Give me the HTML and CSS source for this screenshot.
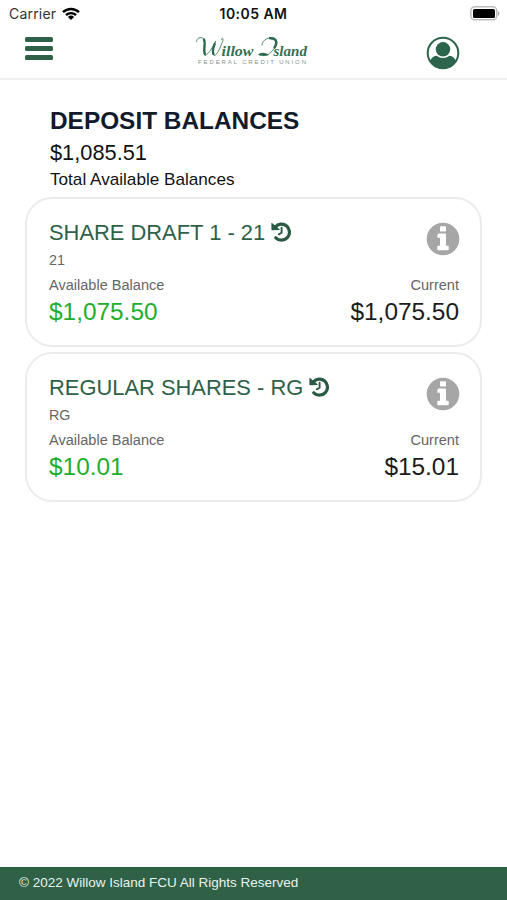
FILE: index.html
```html
<!DOCTYPE html>
<html lang="en">
<head>
<meta charset="utf-8">
<title>Deposit Balances</title>
<link rel="stylesheet" href="styles.css">
</head>
<body>
<svg class="defs" aria-hidden="true">
  <symbol id="history" viewBox="0 0 20 20"><path class="arc" d="M4.200 5.200A8 8 0 1 1 4.800 15.800"/><path d="M.4 1.200Q.4.600 1 1L8.600 7.300Q9 8 8.200 8L1.200 8.300Q.4 8.300.4 7.500z"/><path class="hand" d="M10.600 5.800V10.800L7.800 12.300"/></symbol>
  <symbol id="info" viewBox="0 0 34 34"><path fill-rule="evenodd" d="M17 .7a16.300 16.300 0 1 0 0 32.600A16.300 16.300 0 0 0 17 .7zM14.700 4.200h4.600q.7 0 .7.700v3.800q0 .7-.7.700h-4.600q-.7 0-.7-.7V4.900q0-.7.700-.7zM12 11.500h7.300q.7 0 .7.700v11.600h2q.7 0 .7.700v3q0 .7-.7.700H12q-.7 0-.7-.7v-3q0-.7.700-.7h2v-8h-2q-.7 0-.7-.7v-1.900q0-.7.700-.7z"/></symbol>
</svg>
<div class="status">
  <div class="carrier">Carrier
    <svg class="wifi" viewBox="0 0 18 13"><path d="M1 5.200a11.500 11.500 0 0 1 16 0M4 8.200a7.100 7.100 0 0 1 10 0"/><path class="dot" d="M9 13 5.900 10a4.500 4.500 0 0 1 6.200 0z"/></svg>
  </div>
  <div class="time">10:05 AM</div>
  <svg class="battery" viewBox="0 0 31 15"><rect x=".8" y=".8" width="26" height="13" rx="4"/><rect class="charge" x="3" y="3" width="22" height="9" rx="1.500"/><path class="charge-tip" d="M28 5q3 2.500 0 5z"/></svg>
</div>
<header class="bar">
  <div class="menu"><i></i><i></i><i></i></div>
  <svg class="logo" viewBox="0 0 114 32">
    <path class="swash" d="M1.500 5.500C1.500 2 5.500 .5 8.500 2.500C12 6 7 15 10 19.500C14 18 19 9 20.500 5.500M20.500 5.500C18 11 16 17 19 19.500C23 19 26 9 28 4.500C28.500 2 26.500 1.500 26.500 3.500"/>
    <path class="swash thick" d="M9 3.500C11 8 8 13 9.800 18M19.700 8C18 12 17 15 18.500 18"/>
    <path class="swash" d="M67 9C67 4 74 .5 79 2C85 5 80 15 72 19"/>
    <path class="swash thick" d="M75 2.300C82 2 82.500 7 79.500 11.500"/>
    <path class="leaf" d="M63 19C65 16 70 16 74 19C70 20.500 66 20 63 19z"/>
    <text class="script" x="26.500" y="20" textLength="32" lengthAdjust="spacingAndGlyphs">illow</text>
    <text class="script" x="78.500" y="20" textLength="33.500" lengthAdjust="spacingAndGlyphs">sland</text>
    <text class="sub" x="3" y="27.500" textLength="108">FEDERAL CREDIT UNION</text>
  </svg>
  <svg class="user" viewBox="0 0 34 34"><circle class="ring" cx="17" cy="17" r="15.300"/><circle cx="17" cy="13.300" r="7.200"/><path d="M4 25.500Q5.500 20.300 10.500 19.700Q17 24.500 23.500 19.700Q28.500 20.300 30 25.500A15.500 15.500 0 0 1 4 25.500z"/></svg>
</header>
<main>
  <section class="summary">
    <h1>DEPOSIT BALANCES</h1>
    <div class="total">$1,085.51</div>
    <div class="caption">Total Available Balances</div>
  </section>
  <article class="card">
    <div class="top"><h2>SHARE DRAFT 1 - 21<svg class="hist"><use href="#history"/></svg></h2><svg class="info"><use href="#info"/></svg></div>
    <div class="code">21</div>
    <div class="row labels"><span>Available Balance</span><span>Current</span></div>
    <div class="row amounts"><span class="avail">$1,075.50</span><span>$1,075.50</span></div>
  </article>
  <article class="card">
    <div class="top"><h2>REGULAR SHARES - RG<svg class="hist"><use href="#history"/></svg></h2><svg class="info"><use href="#info"/></svg></div>
    <div class="code">RG</div>
    <div class="row labels"><span>Available Balance</span><span>Current</span></div>
    <div class="row amounts"><span class="avail">$10.01</span><span>$15.01</span></div>
  </article>
</main>
<footer>© 2022 Willow Island FCU All Rights Reserved</footer>
</body>
</html>
```
FILE: styles.css
```css
* { box-sizing: border-box; }
body { margin: 0; height: 900px; display: flex; flex-direction: column; background: #fff; color: #111; font-family: "Liberation Sans", Arial, sans-serif; overflow: hidden; }
svg { display: block; flex: none; }
.defs { position: absolute; width: 0; height: 0; }
.status { height: 28px; display: grid; grid-template-columns: 1fr auto 1fr; align-items: center; padding: 0 6px 0 9px; font-family: Inter, sans-serif; font-size: 14px; line-height: 28px; }
.carrier { display: flex; gap: 6px; align-items: center; color: #333; letter-spacing: .2px; }
.wifi { width: 18px; height: 13px; fill: none; stroke: #000; stroke-width: 2.400; margin-top: -2px; }
.dot { fill: #000; stroke: none; }
.time { font-weight: 600; color: #111; letter-spacing: .45px; margin-right: 3px; }
.battery { width: 31px; height: 15px; justify-self: end; fill: #fff; stroke: #bbb; stroke-width: 1.500; margin-top: -2px; }
.charge { fill: #000; stroke: none; }
.charge-tip { fill: #aaa; stroke: none; }
.bar { height: 52px; border-bottom: 2px solid #efefef; display: flex; justify-content: space-between; align-items: flex-start; padding: 8px 47px 0 25px; }
.menu { width: 28px; display: grid; gap: 4px; padding-top: 1px; margin-right: 24px; }
.menu i { height: 5px; border-radius: 1.500px; background: #2f6149; }
.logo { width: 114px; height: 32px; }
.swash { fill: none; stroke: #3d7a5f; stroke-width: .9; stroke-linecap: round; }
.thick { stroke: #2d6b50; stroke-width: 2.400; }
.leaf { fill: #2d6b50; }
.script { font: italic bold 14px "Liberation Serif", serif; fill: #356f56; }
.sub { font: 6px "Liberation Sans", sans-serif; fill: #85938c; }
.user { width: 34px; height: 34px; fill: #2c644c; margin-top: -.5px; }
.ring { fill: none; stroke: #2c644c; stroke-width: 2; }
main { flex: 1; padding: 24px 25px 0; }
.summary { padding-left: 25px; height: 93px; }
h1 { margin: 0; font-size: 24.400px; line-height: 34px; color: #121a2c; }
.total { font-size: 21.800px; line-height: 30px; color: #111; }
.caption { font-size: 17.150px; line-height: 22px; color: #111; }
.card { height: 150px; margin-bottom: 5px; border: 2px solid #ebebeb; border-radius: 27px; padding: 18px 20px 0 22px; }
.top { display: flex; justify-content: space-between; height: 34px; }
h2 { margin: 0; display: flex; gap: 6px; font-size: 21.900px; line-height: 31px; font-weight: 400; color: #2f6149; }
.hist { width: 20px; height: 20px; fill: #2a5a43; margin-top: 5px; }
.arc { fill: none; stroke: #2a5a43; stroke-width: 3.200; stroke-linecap: round; }
.hand { fill: none; stroke: #2a5a43; stroke-width: 1.900; stroke-linecap: round; }
.info { width: 34px; height: 34px; fill: #a6a6a6; margin-top: 5px; }
.code { font-size: 14.300px; line-height: 18px; color: #666; }
.row { display: flex; justify-content: space-between; padding-right: 1px; }
.labels { font-size: 14.550px; line-height: 20px; margin-top: 6px; color: #666; }
.amounts { font-size: 24.400px; line-height: 33px; color: #1c1c1c; }
.avail { color: #1eae2c; }
footer { height: 33px; padding-left: 19px; background: #2f6147; color: #eaf2ed; font-size: 13.500px; line-height: 31px; }
```
